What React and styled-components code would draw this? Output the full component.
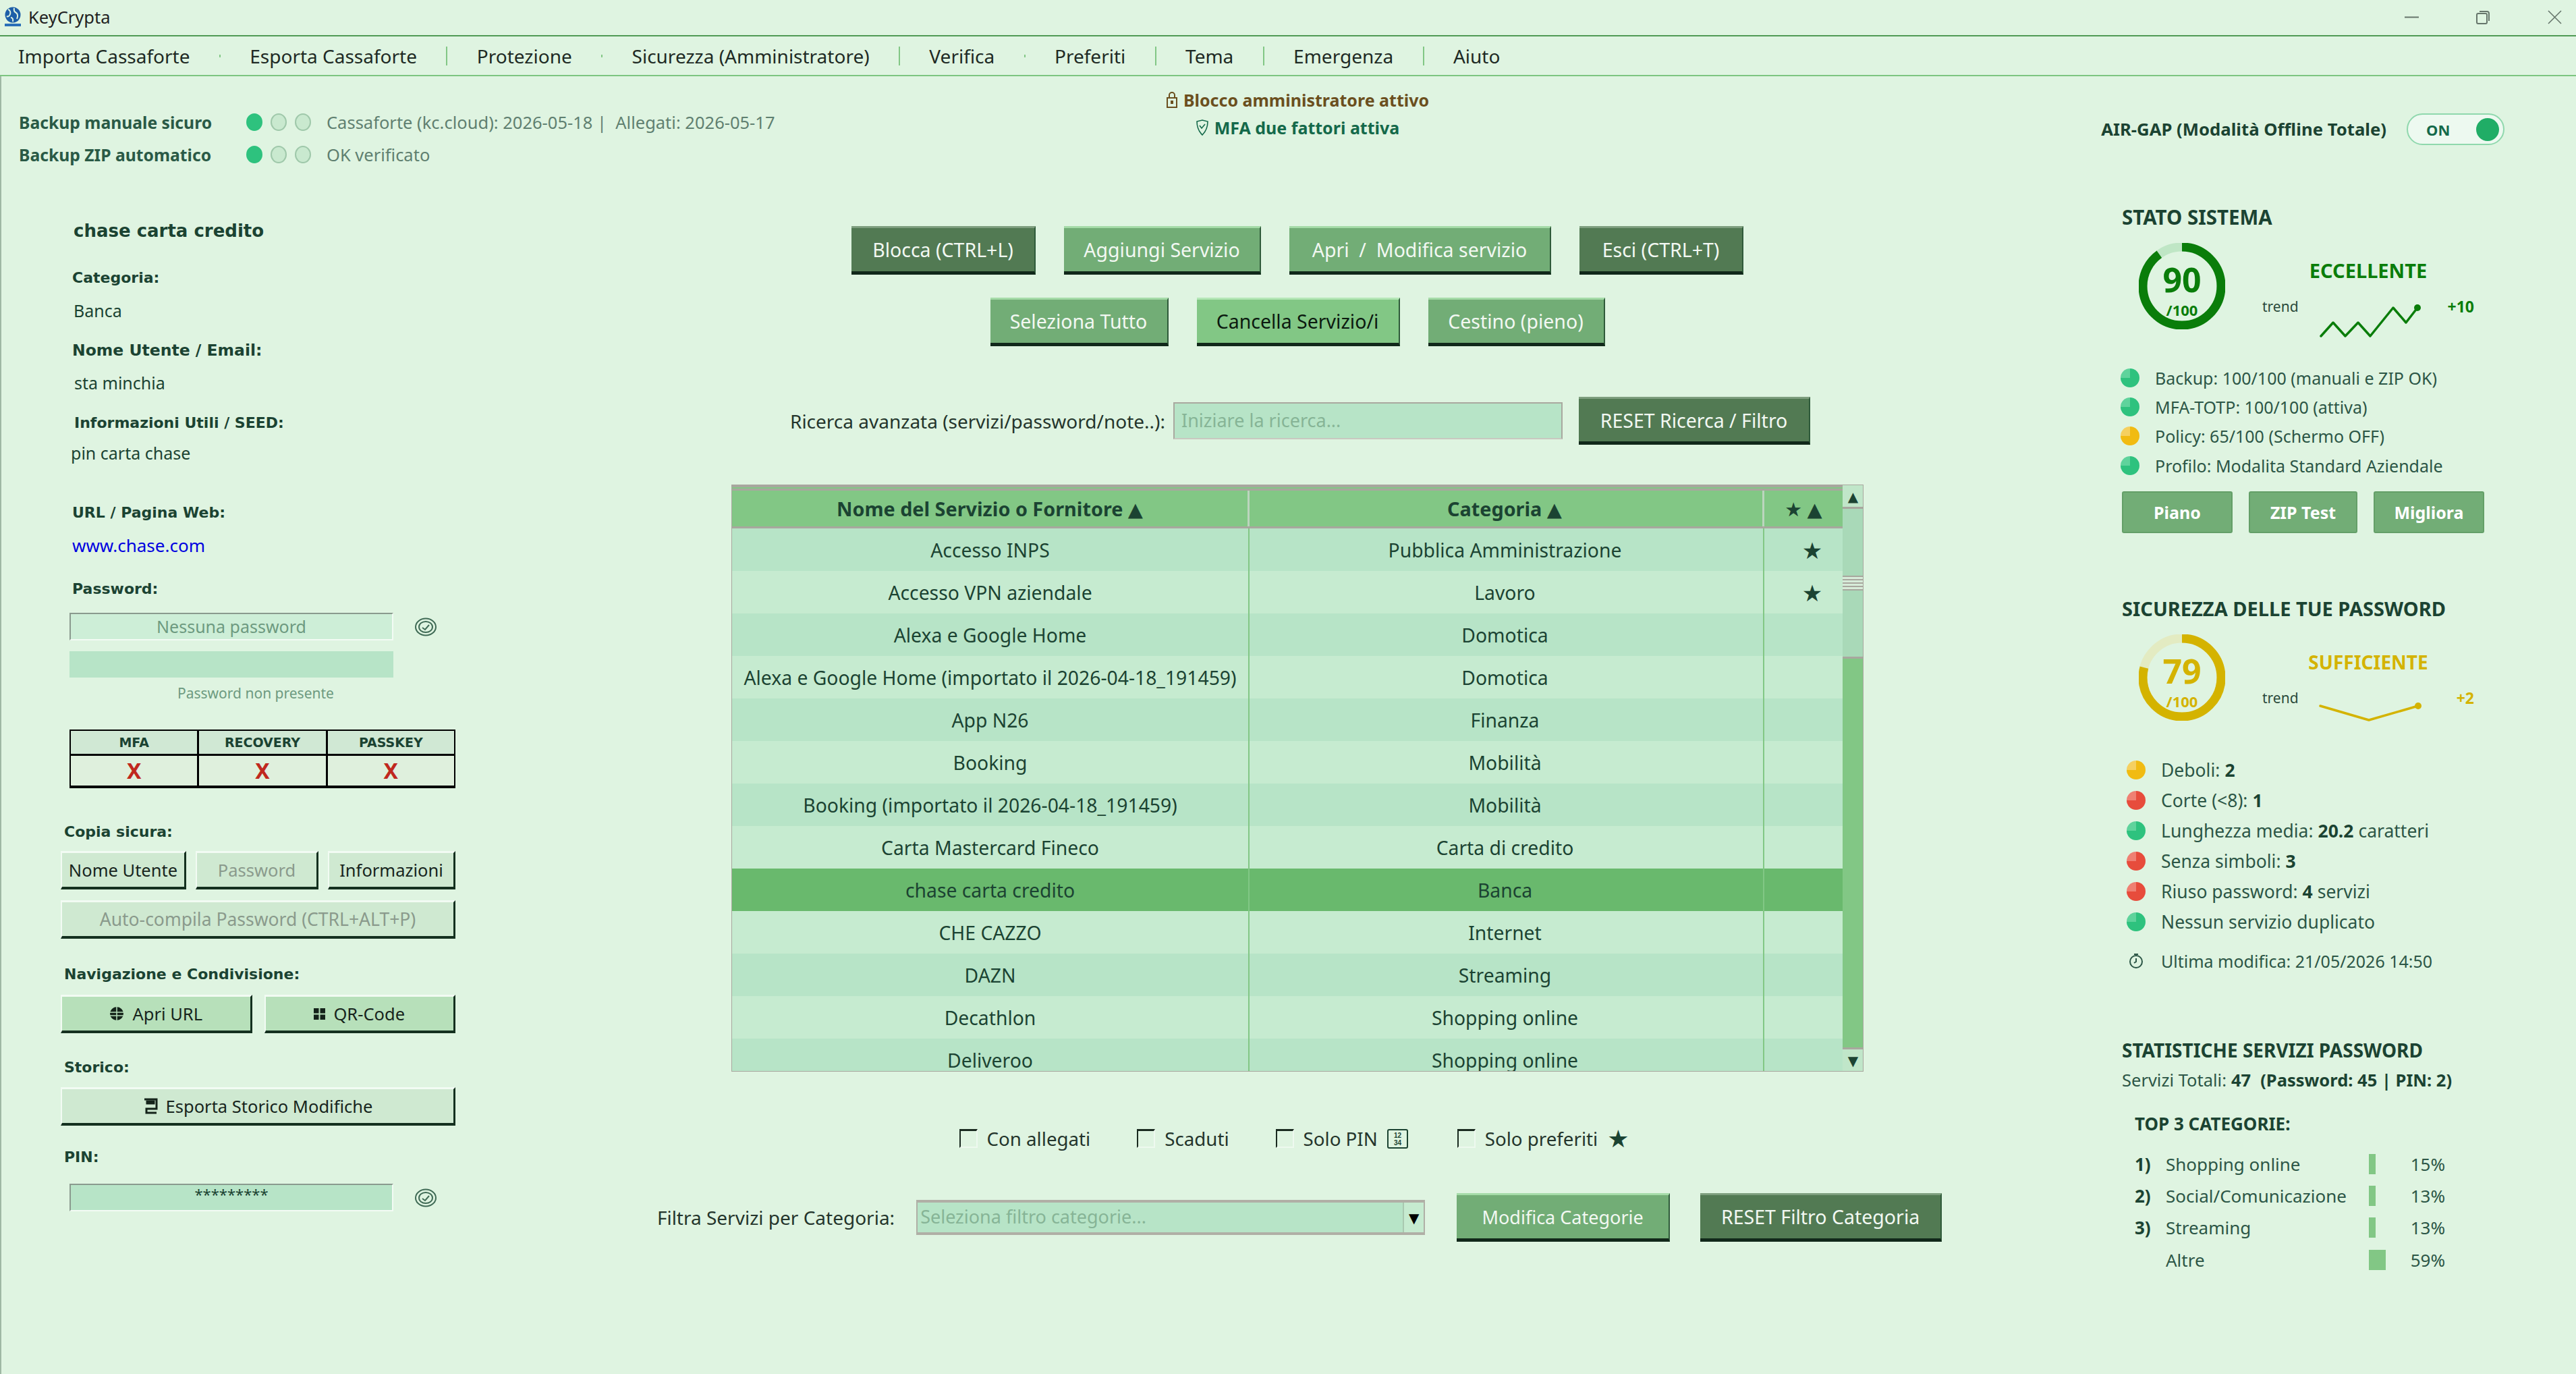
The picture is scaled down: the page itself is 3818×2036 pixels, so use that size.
// App.jsx
import React from "react";
import styled, { createGlobalStyle } from "styled-components";

const ink = "#1b4332";
const font = `"Noto Sans", "DejaVu Sans", sans-serif`;

const GlobalStyle = createGlobalStyle`
  html, body { margin: 0; padding: 0; background: #dff4e1; }
  * { box-sizing: border-box; }
`;

const Page = styled.div`
  width: 3818px;
  height: 2036px;
  overflow: hidden;
  background: #dff4e1;
  color: ${ink};
  font-family: ${font};
  display: flex;
  flex-direction: column;
`;

/* barra del titolo */
const TitleBar = styled.div`
  height: 54px;
  flex: none;
  display: flex;
  align-items: center;
  padding: 0 21px 2px 4px;
  border-bottom: 2px solid #4f9a55;
  font-size: 25.5px;
  color: #222;
`;

const TitleText = styled.span`
  margin-left: 6px;
  margin-right: auto;
`;

const WinIcons = styled.div`
  display: flex;
  align-items: center;
  gap: 85px;
  color: #66756b;
`;

const MenuBar = styled.div`
  height: 59px;
  flex: none;
  display: flex;
  align-items: center;
  gap: 43.4px;
  padding-left: 27px;
  border-bottom: 2px solid #7cc580;
  font-size: 28px;
  color: #1e2a24;
`;

const MenuSep = styled.span`
  width: 2px;
  height: ${(p) => (p.$small ? "4px" : "28px")};
  background: #82c785;
`;

/* fascia di stato */
const Band = styled.div`
  height: 177px;
  flex: none;
  display: grid;
  grid-template-columns: 1170px 1506px 1fr;
  box-shadow: inset 2px 0 #9fb8a4;
`;

const BackupBox = styled.div`
  padding: 44px 0 0 28px;
  white-space: nowrap;
`;

const BackupRow = styled.div`
  display: flex;
  align-items: center;
  height: 48px;
`;

const BackupName = styled.span`
  width: 337px;
  font-size: 24.7px;
  font-weight: 700;
  color: #2a5a46;
`;

const Led = styled.span`
  width: 24px;
  height: 26px;
  margin-right: 12px;
  border-radius: 50%;
  background: ${(p) => (p.$on ? "#2ec27e" : "#c9e9cf")};
  border: 2px solid ${(p) => (p.$on ? "#2ec27e" : "#9fc8aa")};
`;

const BackupInfo = styled.span`
  margin-left: 11px;
  font-size: 25.5px;
  color: #5f8070;
`;

const AdminBox = styled.div`
  padding-top: 14px;
  text-align: center;
  font-size: 25px;
  font-weight: 700;
`;

const AdminLine = styled.div`
  height: 41px;
  display: flex;
  align-items: center;
  justify-content: center;
  gap: 8px;
  color: ${(p) => p.$color};
`;

const AirBox = styled.div`
  padding: 55px 106px 0 0;
  display: flex;
  justify-content: flex-end;
  align-items: flex-start;
  gap: 30px;
`;

const AirLabel = styled.span`
  height: 47px;
  line-height: 47px;
  font-size: 25.7px;
  font-weight: 700;
  white-space: nowrap;
`;

const Toggle = styled.div`
  width: 145px;
  height: 47px;
  padding: 0 6px 0 27px;
  display: flex;
  align-items: center;
  justify-content: space-between;
  border: 2px solid #8fd8ad;
  border-radius: 24px;
  background: #edf9f0;
  color: #14694a;
  font-size: 22px;
  font-weight: 700;
`;

const Knob = styled.span`
  width: 34px;
  height: 34px;
  border-radius: 50%;
  background: #20ad66;
`;

/* corpo a tre colonne */
const Main = styled.div`
  flex: 1;
  display: flex;
  min-height: 0;
  box-shadow: inset 2px 0 #9fb8a4;
`;

const LeftCol = styled.div`
  width: 900px;
  flex: none;
  padding-left: 90px;
`;

const Panel = styled.div`
  width: 585px;
`;

const DetailText = styled.div`
  height: 30px;
  line-height: 30px;
  margin-top: ${(p) => p.$mt}px;
  margin-left: ${(p) => p.$ml || 0}px;
  font-family: ${(p) => (p.$bold ? `"DejaVu Sans", sans-serif` : "inherit")};
  font-size: ${(p) => p.$size || (p.$bold ? 22 : 25)}px;
  font-weight: ${(p) => (p.$bold ? 700 : 400)};
  color: ${(p) => p.$color || ink};
  white-space: nowrap;
`;

const FieldRow = styled.div`
  display: flex;
  align-items: center;
  margin: ${(p) => p.$mt}px 0 0 13px;
  gap: 32px;
`;

const Sunken = styled.div`
  width: 480px;
  height: 41px;
  background: ${(p) => p.$bg};
  border-top: 2px solid #8a9a8e;
  border-left: 2px solid #8a9a8e;
  border-bottom: 2px solid #f3fbf4;
  border-right: 2px solid #f3fbf4;
  text-align: center;
  font-size: ${(p) => (p.$stars ? 22 : 25)}px;
  line-height: ${(p) => (p.$stars ? 26 : 36)}px;
  color: ${(p) => (p.$stars ? ink : "#6d9a80")};
`;

const StrengthBar = styled.div`
  width: 480px;
  height: 39px;
  margin: 16px 0 0 13px;
  background: #b7e4c7;
`;

const FlagGrid = styled.div`
  width: 572px;
  height: 87px;
  margin: 39px 0 0 13px;
  display: grid;
  grid-template-columns: repeat(3, 1fr);
  grid-template-rows: 34px 44px;
  border: 2px solid #000;
  background: #000;
  gap: 3px;
`;

const FlagHead = styled.div`
  background: #d0e8d4;
  text-align: center;
  line-height: 34px;
  font-family: "DejaVu Sans", sans-serif;
  font-size: 19px;
  font-weight: 700;
`;

const FlagCell = styled.div`
  background: #dff0dd;
  text-align: center;
  line-height: 44px;
  font-size: 32px;
  font-weight: 700;
  color: #c0281e;
  overflow: hidden;
`;

const ButtonRow = styled.div`
  display: flex;
  gap: ${(p) => p.$gap || 14}px;
  margin-top: ${(p) => p.$mt}px;
`;

const ClassicButton = styled.div`
  flex: ${(p) => p.$grow || 1};
  height: 57px;
  display: flex;
  align-items: center;
  justify-content: center;
  gap: 12px;
  background: ${(p) => p.$bg || "#cfe9d1"};
  border-top: 3px solid #f2fbf3;
  border-left: 2px solid #f2fbf3;
  border-bottom: 4px solid #14301f;
  border-right: 3px solid #14301f;
  font-size: ${(p) => p.$size || 25.5}px;
  color: ${(p) => (p.$off ? "#8a9a8c" : "#17251d")};
  white-space: nowrap;
`;

/* colonna centrale */
const CenterCol = styled.div`
  width: 2046px;
  flex: none;
  display: flex;
  flex-direction: column;
  align-items: center;
`;

const ActionRow = styled.div`
  display: flex;
  justify-content: center;
  gap: 42px;
  margin-top: ${(p) => p.$mt}px;
`;

const tones = {
  dark: { bg: "#527a53", top: "#7e9e7e", color: "#f2f8f2" },
  mid: { bg: "#72ad76", top: "#a5dba8", color: "#f2f8f2" },
  light: { bg: "#82c785", top: "#b4e6b6", color: "#0c1a10" },
};

const ActionButton = styled.div`
  width: ${(p) => p.$w}px;
  height: ${(p) => p.$h || 72}px;
  margin-right: ${(p) => p.$mr || 0}px;
  display: flex;
  align-items: center;
  justify-content: center;
  background: ${(p) => tones[p.$tone].bg};
  color: ${(p) => tones[p.$tone].color};
  border-top: 3px solid ${(p) => tones[p.$tone].top};
  border-bottom: 5px solid #11281a;
  border-right: 2px solid #2f5a3a;
  font-size: ${(p) => p.$size || 28.5}px;
  white-space: nowrap;
`;

const SearchRow = styled.div`
  display: flex;
  align-items: center;
  margin: 75px 0 0 8px;
  height: 71px;
`;

const PlainLabel = styled.span`
  font-size: 28px;
  color: #24352c;
  white-space: nowrap;
`;

const SearchInput = styled.div`
  width: 577px;
  height: 55px;
  margin: 0 24px 0 12px;
  padding-left: 10px;
  line-height: 50px;
  background: #b7e4c7;
  border: 2px solid #a9a89f;
  border-bottom-color: #c9c8c0;
  font-size: 27px;
  color: #86b496;
`;

const TableFrame = styled.div`
  width: 1678px;
  height: 870px;
  margin-top: 59px;
  display: flex;
  overflow: hidden;
  border: 1px solid #a8a79e;
`;

const TableBody = styled.div`
  width: 1646px;
  flex: none;
`;

const TableHead = styled.div`
  display: grid;
  grid-template-columns: 767px 763px 1fr;
  height: 64px;
  border-top: 8px double #a8a79e;
  border-bottom: 3px solid #a8a79e;
  background: #82c785;
`;

const HeadCell = styled.div`
  display: flex;
  align-items: center;
  justify-content: center;
  font-size: 28.8px;
  font-weight: 700;
  border-right: 3px solid #bcd5be;
  &:nth-child(2) { padding-right: 4px; }
  &:last-child { border-right: 0; }
`;

const Row = styled.div`
  display: grid;
  grid-template-columns: 767px 763px 1fr;
  height: 63px;
  background: ${(p) => (p.$selected ? "#69b96d" : p.$even ? "#c6ebd0" : "#b7e4c7")};
`;

const Cell = styled.div`
  display: flex;
  align-items: center;
  justify-content: center;
  font-size: 28.3px;
  color: ${ink};
  white-space: nowrap;
  border-right: 2px solid #82c785;
  &:nth-child(2) { padding-right: 4px; }
  &:last-child { border-right: 0; padding-left: 26px; font-size: 34px; }
`;

const ScrollTrack = styled.div`
  width: 31px;
  flex: none;
  display: flex;
  flex-direction: column;
  background: #82c785;
`;

const ScrollArrow = styled.div`
  height: 35px;
  flex: none;
  margin-top: ${(p) => (p.$end ? "auto" : 0)};
  display: flex;
  align-items: center;
  justify-content: center;
  background: #c0e6c9;
  border-bottom: ${(p) => (p.$end ? 0 : "3px solid #a8a79e")};
  border-top: ${(p) => (p.$end ? "3px solid #a8a79e" : "0")};
  font-size: 20px;
`;

const ScrollThumb = styled.div`
  height: 222px;
  flex: none;
  display: flex;
  align-items: center;
  background: #a9d9b8;
  border-bottom: 3px solid #a8a79e;
`;

const ThumbGrip = styled.div`
  width: 100%;
  height: 22px;
  background: repeating-linear-gradient(#a8a79e 0 2px, #d7ecd9 2px 5px);
`;

const CheckRow = styled.div`
  display: flex;
  align-items: center;
  margin: 84px 10px 0 0;
  height: 30px;
`;

const CheckItem = styled.div`
  display: flex;
  align-items: center;
  gap: 14px;
  margin-right: ${(p) => p.$mr || 0}px;
  font-size: 27.7px;
  color: #24352c;
  white-space: nowrap;
`;

const CheckBox = styled.span`
  width: 27px;
  height: 28px;
  border-top: 3px solid #1a2a20;
  border-left: 2px solid #1a2a20;
  border-bottom: 2px solid #eef9ef;
  border-right: 2px solid #eef9ef;
`;

const FavStar = styled.span`
  font-size: 36px;
  line-height: 30px;
  color: ${ink};
`;

const FilterRow = styled.div`
  display: flex;
  align-items: center;
  margin-top: 66px;
  margin-left: 6px;
`;

const Combo = styled.div`
  width: 754px;
  height: 52px;
  margin: 0 47px 0 32px;
  display: flex;
  border: 2px solid #b0afa6;
  border-top-width: 4px;
  border-bottom-width: 4px;
`;

const ComboText = styled.div`
  flex: 1;
  padding-left: 4px;
  line-height: 42px;
  background: #b7e4c7;
  font-size: 27px;
  color: #86b496;
`;

const ComboArrow = styled.div`
  width: 31px;
  display: flex;
  align-items: center;
  justify-content: center;
  background: #c6ebd0;
  border-left: 2px solid #a9c9b0;
  font-size: 20px;
  color: #000;
`;

/* colonna destra */
const RightCol = styled.div`
  flex: 1;
  padding: 14px 0 0 199px;
`;

const Heading = styled.div`
  height: 36px;
  line-height: 36px;
  margin-top: ${(p) => p.$mt || 0}px;
  margin-left: ${(p) => p.$ml || 0}px;
  font-size: ${(p) => p.$size || 28}px;
  font-weight: 700;
  white-space: nowrap;
`;

const GaugeRow = styled.div`
  display: flex;
  height: 128px;
  margin: 20px 0 0 25px;
`;

const Ring = styled.div`
  width: 128px;
  height: 128px;
  display: grid;
  justify-items: center;
  & > * { grid-area: 1 / 1; }
  color: ${(p) => p.$color};
`;

const RingText = styled.div`
  padding-top: 24px;
  text-align: center;
  font-weight: 700;
`;

const RingValue = styled.div`
  height: 60px;
  line-height: 60px;
  font-size: 50px;
`;

const RingMax = styled.div`
  height: 30px;
  line-height: 30px;
  font-size: 22px;
`;

const GaugeInfo = styled.div`
  width: 314px;
  margin-left: 55px;
  padding-top: 21px;
`;

const GaugeTitle = styled.div`
  height: 40px;
  line-height: 40px;
  text-align: center;
  font-size: ${(p) => p.$size || 29}px;
  font-weight: 700;
  color: ${(p) => p.$color};
`;

const TrendRow = styled.div`
  display: flex;
  align-items: flex-start;
  margin-top: 18px;
  height: 66px;
`;

const TrendLabel = styled.span`
  width: 82px;
  line-height: 30px;
  font-size: 21px;
  color: #2a4a3a;
`;

const TrendDelta = styled.span`
  margin-left: auto;
  line-height: 30px;
  font-size: 23px;
  font-weight: 700;
  color: ${(p) => p.$color};
`;

const StatusList = styled.div`
  margin: 50px 0 0 ${(p) => p.$ml || 0}px;
`;

const StatusRow = styled.div`
  display: flex;
  align-items: center;
  height: ${(p) => p.$h}px;
  margin-top: ${(p) => p.$mt || 0}px;
  gap: 23px;
  font-size: ${(p) => p.$size || 25}px;
  color: #2c5646;
  white-space: nowrap;
`;

const StatusDot = styled.span`
  width: 28px;
  height: 28px;
  flex: none;
  border-radius: 50%;
  background: conic-gradient(from 270deg, ${(p) => p.$hi} 0 25%, ${(p) => p.$color} 25% 100%);
`;

const ClockSlot = styled.span`
  width: 28px;
  flex: none;
  display: flex;
  justify-content: center;
`;

const Strong = styled.b`
  font-weight: 700;
  color: ${ink};
  margin: 0 7px;
`;

const SmallButtons = styled.div`
  display: flex;
  gap: 24px;
  margin-top: 17px;
`;

const SmallButton = styled.div`
  width: ${(p) => p.$w}px;
  height: 62px;
  display: flex;
  align-items: center;
  justify-content: center;
  background: #72ad76;
  border: 2px solid #649f68;
  border-radius: 3px;
  color: #fff;
  font-size: 25px;
  font-weight: 700;
`;

const StatsLine = styled.div`
  height: 36px;
  line-height: 36px;
  margin-top: 8px;
  font-size: 25.5px;
  color: #2c5646;
  white-space: nowrap;
`;

const CatList = styled.div`
  margin: 18px 0 0 19px;
  width: 460px;
`;

const CatRow = styled.div`
  display: grid;
  grid-template-columns: 46px 301px 1fr auto;
  align-items: center;
  height: 47.3px;
  font-size: 26px;
  color: #2c5646;
`;

const CatNum = styled.span`
  font-weight: 700;
  color: ${ink};
`;

const CatBar = styled.span`
  display: block;
  height: 30px;
  width: ${(p) => p.$w}px;
  background: #82c785;
`;

/* ---- disegni ---- */

const Logo = () => (
  <svg width="32" height="30" viewBox="0 0 32 30">
    <circle cx="15" cy="12" r="11.5" fill="#1d5fa8" />
    <path d="M8 4c3 1 4 4 3 7s-3 4-5 3M17 2c-1 4 1 6 3 7s3 5 1 9M12 16c2 0 4 2 3 6" fill="none" stroke="#dff4e1" strokeWidth="2" />
    <rect x="3" y="25" width="24" height="4" fill="#2a6fb8" />
  </svg>
);

const Minimize = () => (
  <svg width="21" height="21" viewBox="0 0 21 21"><path d="M0 10.5h21" stroke="currentColor" strokeWidth="2" /></svg>
);

const Restore = () => (
  <svg width="21" height="21" viewBox="0 0 21 21" fill="none" stroke="currentColor" strokeWidth="2">
    <rect x="1" y="5" width="15" height="15" rx="2" />
    <path d="M5 2h11a3 3 0 0 1 3 3v11" />
  </svg>
);

const CloseX = () => (
  <svg width="21" height="21" viewBox="0 0 21 21"><path d="M1 1l19 19M20 1L1 20" stroke="currentColor" strokeWidth="1.6" /></svg>
);

const LockIcon = () => (
  <svg width="18" height="26" viewBox="0 0 18 26" fill="none" stroke="#6b4f1e" strokeWidth="2">
    <rect x="2" y="10" width="14" height="14" />
    <path d="M5 10V6a4 4 0 0 1 8 0v4" />
    <rect x="8" y="15" width="2" height="3" />
  </svg>
);

const ShieldIcon = () => (
  <svg width="20" height="26" viewBox="0 0 20 26" fill="none" stroke="#14694a" strokeWidth="1.6">
    <path d="M2 4l8-2 8 2c0 8-2 14-8 20C4 18 2 12 2 4z" />
    <path d="M6 10l3 4 5-6" />
  </svg>
);

const EyeIcon = () => (
  <svg width="32" height="28" viewBox="0 0 32 28" fill="none" stroke="#3f6a55" strokeWidth="2">
    <ellipse cx="16" cy="14" rx="15" ry="12.5" />
    <ellipse cx="16" cy="14" rx="10" ry="8" />
    <path d="M11 15l4 3 6-7" />
  </svg>
);

const GlobeIcon = () => (
  <svg width="22" height="22" viewBox="0 0 22 22">
    <circle cx="11" cy="11" r="10" fill="#14231a" />
    <path d="M1 9h20M1 14h20M11 1v20" stroke="#b7e0ba" strokeWidth="1.5" />
  </svg>
);

const QrIcon = () => (
  <svg width="17" height="17" viewBox="0 0 17 17">
    <rect width="17" height="17" fill="#14231a" />
    <path d="M8.5 0v17M0 8.5h17" stroke="#b7e0ba" strokeWidth="2" />
  </svg>
);

const SaveIcon = () => (
  <svg width="22" height="24" viewBox="0 0 22 24" fill="none" stroke="#14231a">
    <path d="M2 2h18v14H5v6h15" strokeWidth="3" />
    <rect x="5" y="4" width="12" height="5" fill="#14231a" />
  </svg>
);

const PinIcon = () => (
  <svg width="31" height="29" viewBox="0 0 31 29">
    <rect x="1" y="1" width="29" height="27" rx="2" fill="none" stroke="#1b4332" strokeWidth="2" />
    <text x="15.5" y="13" textAnchor="middle" fontSize="10" fontWeight="700" fill="#1b4332" fontFamily="Liberation Sans, sans-serif">12</text>
    <text x="15.5" y="24" textAnchor="middle" fontSize="10" fontWeight="700" fill="#1b4332" fontFamily="Liberation Sans, sans-serif">34</text>
  </svg>
);

const ClockIcon = () => (
  <svg width="24" height="24" viewBox="0 0 24 24" fill="none" stroke="#2c5646" strokeWidth="2">
    <circle cx="12" cy="13" r="9" />
    <path d="M12 8v5l-3 2M9 2h6" />
  </svg>
);

const RingChart = ({ value, color, track }) => {
  const r = 58;
  const len = 2 * Math.PI * r;
  return (
    <svg width="128" height="128" viewBox="0 0 128 128">
      <circle cx="64" cy="64" r={r} fill="none" stroke={track} strokeWidth="13" />
      <circle
        cx="64"
        cy="64"
        r={r}
        fill="none"
        stroke={color}
        strokeWidth="13"
        strokeDasharray={`${(len * value) / 100} ${len}`}
        transform="rotate(-90 64 64)"
      />
    </svg>
  );
};

const SparkSvg = styled.svg`
  margin-top: 6px;
`;

const Spark = ({ points, color, end }) => (
  <SparkSvg width="160" height="60" viewBox="0 0 160 60">
    <polyline points={points} fill="none" stroke={color} strokeWidth="3.5" strokeLinejoin="round" strokeLinecap="round" />
    <circle cx={end[0]} cy={end[1]} r="5" fill={color} />
  </SparkSvg>
);

/* ---- dati ---- */

const menu = [
  ["Importa Cassaforte", true],
  ["Esporta Cassaforte", false],
  ["Protezione", true],
  ["Sicurezza (Amministratore)", false],
  ["Verifica", true],
  ["Preferiti", false],
  ["Tema", false],
  ["Emergenza", false],
  ["Aiuto"],
];

const services = [
  ["Accesso INPS", "Pubblica Amministrazione", "★"],
  ["Accesso VPN aziendale", "Lavoro", "★"],
  ["Alexa e Google Home", "Domotica"],
  ["Alexa e Google Home (importato il 2026-04-18_191459)", "Domotica"],
  ["App N26", "Finanza"],
  ["Booking", "Mobilità"],
  ["Booking (importato il 2026-04-18_191459)", "Mobilità"],
  ["Carta Mastercard Fineco", "Carta di credito"],
  ["chase carta credito", "Banca"],
  ["CHE CAZZO", "Internet"],
  ["DAZN", "Streaming"],
  ["Decathlon", "Shopping online"],
  ["Deliveroo", "Shopping online"],
];

const dot = {
  green: { $color: "#2ec27e", $hi: "#5fd39c" },
  yellow: { $color: "#f1bb12", $hi: "#f5d060" },
  red: { $color: "#e74c3c", $hi: "#ef8073" },
};

const categories = [
  ["1)", "Shopping online", 10, "15%"],
  ["2)", "Social/Comunicazione", 10, "13%"],
  ["3)", "Streaming", 10, "13%"],
  ["", "Altre", 25, "59%"],
];

const App = () => (
  <Page>
    <GlobalStyle />

    <TitleBar>
      <Logo />
      <TitleText>KeyCrypta</TitleText>
      <WinIcons>
        <Minimize />
        <Restore />
        <CloseX />
      </WinIcons>
    </TitleBar>

    <MenuBar>
      {menu.map(([label, small], i) => (
        <React.Fragment key={label}>
          <span>{label}</span>
          {i < menu.length - 1 && <MenuSep $small={small} />}
        </React.Fragment>
      ))}
    </MenuBar>

    <Band>
      <BackupBox>
        <BackupRow>
          <BackupName>Backup manuale sicuro</BackupName>
          <Led $on /><Led /><Led />
          <BackupInfo>Cassaforte (kc.cloud): 2026-05-18 |&nbsp;&nbsp;Allegati: 2026-05-17</BackupInfo>
        </BackupRow>
        <BackupRow>
          <BackupName>Backup ZIP automatico</BackupName>
          <Led $on /><Led /><Led />
          <BackupInfo>OK verificato</BackupInfo>
        </BackupRow>
      </BackupBox>
      <AdminBox>
        <AdminLine $color="#6b4f1e"><LockIcon />Blocco amministratore attivo</AdminLine>
        <AdminLine $color="#14694a"><ShieldIcon />MFA due fattori attiva</AdminLine>
      </AdminBox>
      <AirBox>
        <AirLabel>AIR-GAP (Modalità Offline Totale)</AirLabel>
        <Toggle>ON<Knob /></Toggle>
      </AirBox>
    </Band>

    <Main>
      <LeftCol>
        <Panel>
          <DetailText $mt={37} $ml={19} $bold $size={26}>chase carta credito</DetailText>
          <DetailText $mt={40} $ml={17} $bold>Categoria:</DetailText>
          <DetailText $mt={18} $ml={19}>Banca</DetailText>
          <DetailText $mt={29} $ml={17} $bold $size={23.5}>Nome Utente / Email:</DetailText>
          <DetailText $mt={18} $ml={20}>sta minchia</DetailText>
          <DetailText $mt={30} $ml={20} $bold>Informazioni Utili / SEED:</DetailText>
          <DetailText $mt={14} $ml={15}>pin carta chase</DetailText>
          <DetailText $mt={59} $ml={17} $bold>URL / Pagina Web:</DetailText>
          <DetailText $mt={18} $ml={17} $size={26} $color="#0000e0">www.chase.com</DetailText>
          <DetailText $mt={35} $ml={17} $bold>Password:</DetailText>
          <FieldRow $mt={20}>
            <Sunken $bg="#cdeed7">Nessuna password</Sunken>
            <EyeIcon />
          </FieldRow>
          <StrengthBar />
          <DetailText $mt={8} $ml={173} $size={21} $color="#6d9a80">Password non presente</DetailText>
          <FlagGrid>
            <FlagHead>MFA</FlagHead>
            <FlagHead>RECOVERY</FlagHead>
            <FlagHead>PASSKEY</FlagHead>
            <FlagCell>X</FlagCell>
            <FlagCell>X</FlagCell>
            <FlagCell>X</FlagCell>
          </FlagGrid>
          <DetailText $mt={50} $ml={5} $bold>Copia sicura:</DetailText>
          <ButtonRow $mt={13}>
            <ClassicButton $grow={186}>Nome Utente</ClassicButton>
            <ClassicButton $grow={182} $off>Password</ClassicButton>
            <ClassicButton $grow={189}>Informazioni</ClassicButton>
          </ButtonRow>
          <ButtonRow $mt={16}>
            <ClassicButton $off $size={26.5}>Auto-compila Password (CTRL+ALT+P)</ClassicButton>
          </ButtonRow>
          <DetailText $mt={38} $ml={5} $bold>Navigazione e Condivisione:</DetailText>
          <ButtonRow $mt={15} $gap={18}>
            <ClassicButton $bg="#b7e0ba"><GlobeIcon />Apri URL</ClassicButton>
            <ClassicButton $bg="#b7e0ba"><QrIcon />QR-Code</ClassicButton>
          </ButtonRow>
          <DetailText $mt={36} $ml={5} $bold>Storico:</DetailText>
          <ButtonRow $mt={14}>
            <ClassicButton><SaveIcon />Esporta Storico Modifiche</ClassicButton>
          </ButtonRow>
          <DetailText $mt={32} $ml={5} $bold>PIN:</DetailText>
          <FieldRow $mt={24}>
            <Sunken $bg="#b7e4c7" $stars>*********</Sunken>
            <EyeIcon />
          </FieldRow>
        </Panel>
      </LeftCol>

      <CenterCol>
        <ActionRow $mt={45}>
          <ActionButton $w={273} $tone="dark">Blocca (CTRL+L)</ActionButton>
          <ActionButton $w={292} $tone="mid">Aggiungi Servizio</ActionButton>
          <ActionButton $w={388} $tone="mid">Apri&nbsp;&nbsp;/&nbsp;&nbsp;Modifica servizio</ActionButton>
          <ActionButton $w={243} $tone="dark">Esci (CTRL+T)</ActionButton>
        </ActionRow>
        <ActionRow $mt={34}>
          <ActionButton $w={264} $tone="mid">Seleziona Tutto</ActionButton>
          <ActionButton $w={301} $tone="light">Cancella Servizio/i</ActionButton>
          <ActionButton $w={262} $tone="mid">Cestino (pieno)</ActionButton>
        </ActionRow>

        <SearchRow>
          <PlainLabel>Ricerca avanzata (servizi/password/note..):</PlainLabel>
          <SearchInput>Iniziare la ricerca...</SearchInput>
          <ActionButton $w={343} $h={71} $tone="dark">RESET Ricerca / Filtro</ActionButton>
        </SearchRow>

        <TableFrame>
          <TableBody>
            <TableHead>
              <HeadCell>Nome del Servizio o Fornitore ▲</HeadCell>
              <HeadCell>Categoria ▲</HeadCell>
              <HeadCell>★ ▲</HeadCell>
            </TableHead>
            {services.map(([name, cat, fav], i) => (
              <Row key={name} $even={i % 2 === 1} $selected={name === "chase carta credito"}>
                <Cell>{name}</Cell>
                <Cell>{cat}</Cell>
                <Cell>{fav}</Cell>
              </Row>
            ))}
          </TableBody>
          <ScrollTrack>
            <ScrollArrow>▲</ScrollArrow>
            <ScrollThumb><ThumbGrip /></ScrollThumb>
            <ScrollArrow $end>▼</ScrollArrow>
          </ScrollTrack>
        </TableFrame>

        <CheckRow>
          <CheckItem $mr={69}><CheckBox />Con allegati</CheckItem>
          <CheckItem $mr={69}><CheckBox />Scaduti</CheckItem>
          <CheckItem $mr={73}><CheckBox />Solo PIN <PinIcon /></CheckItem>
          <CheckItem><CheckBox />Solo preferiti <FavStar>★</FavStar></CheckItem>
        </CheckRow>

        <FilterRow>
          <PlainLabel>Filtra Servizi per Categoria:</PlainLabel>
          <Combo>
            <ComboText>Seleziona filtro categorie...</ComboText>
            <ComboArrow>▼</ComboArrow>
          </Combo>
          <ActionButton $w={316} $mr={45} $size={27} $tone="mid">Modifica Categorie</ActionButton>
          <ActionButton $w={358} $tone="dark">RESET Filtro Categoria</ActionButton>
        </FilterRow>
      </CenterCol>

      <RightCol>
        <Heading $size={29.5}>STATO SISTEMA</Heading>
        <GaugeRow>
          <Ring $color="#0a7d0a">
            <RingChart value={90} color="#0a7d0a" track="#bfe6c5" />
            <RingText>
              <RingValue>90</RingValue>
              <RingMax>/100</RingMax>
            </RingText>
          </Ring>
          <GaugeInfo>
            <GaugeTitle $color="#0a7d0a">ECCELLENTE</GaugeTitle>
            <TrendRow>
              <TrendLabel>trend</TrendLabel>
              <Spark
                color="#0a7d0a"
                points="5,53 23,33 41,53 60,33 78,53 112,11 131,33 148,11"
                end={[148, 11]}
              />
              <TrendDelta $color="#0a7d0a">+10</TrendDelta>
            </TrendRow>
          </GaugeInfo>
        </GaugeRow>
        <StatusList $ml={-2}>
          <StatusRow $h={43.3}><StatusDot {...dot.green} />Backup: 100/100 (manuali e ZIP OK)</StatusRow>
          <StatusRow $h={43.3}><StatusDot {...dot.green} />MFA-TOTP: 100/100 (attiva)</StatusRow>
          <StatusRow $h={43.3}><StatusDot {...dot.yellow} />Policy: 65/100 (Schermo OFF)</StatusRow>
          <StatusRow $h={43.3}><StatusDot {...dot.green} />Profilo: Modalita Standard Aziendale</StatusRow>
        </StatusList>
        <SmallButtons>
          <SmallButton $w={164}>Piano</SmallButton>
          <SmallButton $w={161}>ZIP Test</SmallButton>
          <SmallButton $w={164}>Migliora</SmallButton>
        </SmallButtons>

        <Heading $mt={94} $size={29}>SICUREZZA DELLE TUE PASSWORD</Heading>
        <GaugeRow>
          <Ring $color="#d4b300">
            <RingChart value={79} color="#d4b300" track="#e3ebc2" />
            <RingText>
              <RingValue>79</RingValue>
              <RingMax>/100</RingMax>
            </RingText>
          </Ring>
          <GaugeInfo>
            <GaugeTitle $color="#d4b300" $size={28}>SUFFICIENTE</GaugeTitle>
            <TrendRow>
              <TrendLabel>trend</TrendLabel>
              <Spark color="#d4b300" points="4,21 76,42 149,21" end={[149, 21]} />
              <TrendDelta $color="#d4b300">+2</TrendDelta>
            </TrendRow>
          </GaugeInfo>
        </GaugeRow>
        <StatusList $ml={7}>
          <StatusRow $h={45} $size={26.5}><StatusDot {...dot.yellow} /><span>Deboli:<Strong>2</Strong></span></StatusRow>
          <StatusRow $h={45} $size={26.5}><StatusDot {...dot.red} /><span>Corte (&lt;8):<Strong>1</Strong></span></StatusRow>
          <StatusRow $h={45} $size={26.5}><StatusDot {...dot.green} /><span>Lunghezza media:<Strong>20.2</Strong>caratteri</span></StatusRow>
          <StatusRow $h={45} $size={26.5}><StatusDot {...dot.red} /><span>Senza simboli:<Strong>3</Strong></span></StatusRow>
          <StatusRow $h={45} $size={26.5}><StatusDot {...dot.red} /><span>Riuso password:<Strong>4</Strong>servizi</span></StatusRow>
          <StatusRow $h={45} $size={26.5}><StatusDot {...dot.green} />Nessun servizio duplicato</StatusRow>
          <StatusRow $h={45} $mt={13}><ClockSlot><ClockIcon /></ClockSlot>Ultima modifica: 21/05/2026 14:50</StatusRow>
        </StatusList>

        <Heading $mt={92}>STATISTICHE SERVIZI PASSWORD</Heading>
        <StatsLine>Servizi Totali:<Strong>47</Strong><Strong>(Password: 45 | PIN: 2)</Strong></StatsLine>
        <Heading $mt={29} $ml={19} $size={26}>TOP 3 CATEGORIE:</Heading>
        <CatList>
          {categories.map(([num, label, w, pct]) => (
            <CatRow key={label}>
              <CatNum>{num}</CatNum>
              <span>{label}</span>
              <CatBar $w={w} />
              <span>{pct}</span>
            </CatRow>
          ))}
        </CatList>
      </RightCol>
    </Main>
  </Page>
);

export default App;
